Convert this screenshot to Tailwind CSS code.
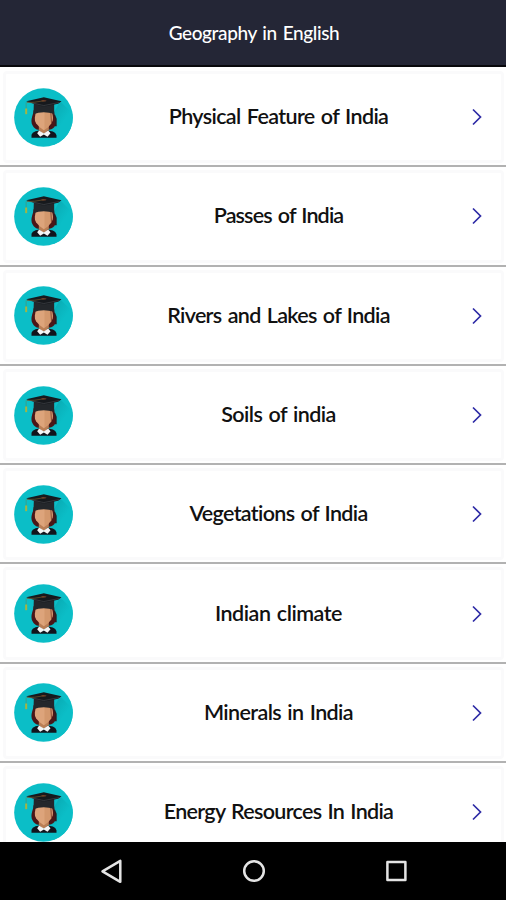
<!DOCTYPE html>
<html lang="en">
<head>
<meta charset="utf-8">
<title>Geography in English</title>
<script src="https://cdn.jsdelivr.net/npm/@tailwindcss/browser@4"></script>
</head>
<body class="w-[506px] h-[900px] overflow-hidden bg-white font-['Lato','Open_Sans',sans-serif]">
<div class="flex flex-col h-[900px]">
  <header class="h-[67px] shrink-0 bg-[#242636] border-b-2 border-[#08080c] flex items-center justify-center pl-[2px] text-white">
    <h1 class="text-[19px] leading-6 font-medium whitespace-nowrap" data-w="170" data-font="500 19px Lato">Geography in English</h1>
  </header>
  <main id="list" class="flex-1 min-h-0 overflow-hidden pt-px"></main>
  <nav class="h-[58px] shrink-0 bg-black">
    <svg class="w-full h-full" viewBox="0 0 506 58" fill="none" stroke="#e4e4e4" stroke-width="2.5" stroke-linejoin="round">
      <path d="M120.3 18.8V39.8L102.5 29.3Z"/>
      <circle cx="254" cy="29" r="9.8"/>
      <rect x="387.4" y="20" width="18" height="18"/>
    </svg>
  </nav>
</div>
<template id="row">
  <div class="h-[99.3px] border-b-2 border-[#b2b2b2] bg-white pt-[3px] pb-[2px] pl-[3px] pr-[2px]">
    <div class="h-full border-[3px] border-[#fafafb] rounded-[4px] flex items-center pl-[8px] pr-[19px]">
      <svg class="w-[59px] h-[59px] shrink-0" viewBox="17.5 16.5 177 177">
        <defs>
          <linearGradient id="shade" x1="0" y1="0" x2="1" y2="1"><stop offset=".1" stop-color="#08a3ac"/><stop offset=".5" stop-color="#0bbec7"/></linearGradient>
          <clipPath id="disc"><circle cx="106" cy="105" r="88"/></clipPath>
        </defs>
        <circle cx="106" cy="105" r="88" fill="#0bbec7"/>
        <path d="M156 56L210 110V210H160L100 155Z" fill="url(#shade)" clip-path="url(#disc)"/>
        <path d="M76 83Q76 92 72 102Q67 119 73 128Q80 141 91 142H122Q138 139 141 129Q146 116 140 102L137 82Z" fill="#4a1718"/>
        <path d="M92 128H122V153H92Z" fill="#b97e55"/>
        <path d="M83 88H131L134 106Q134 116 129 123Q120 135 107 143Q93 135 84 123Q79 116 80 106Z" fill="#dda47b"/>
        <path d="M109 88H131L134 106Q134 116 129 123Q120 135 109 142Z" fill="#d3986d"/>
        <path d="M128 90L130 122" stroke="#8c4e38" stroke-width="3"/>
        <path d="M70 166V157Q72 149 82 146L94 144L106 156L119 144L134 147Q143 150 145 158V166Z" fill="#12141c"/>
        <path d="M93 144L107 153L120 144L127 152L118 163L107 156L96 163L87 152Z" fill="#f4f5f5"/>
        <path d="M77 63L138 62V94Q122 89 107 89Q90 89 76 95Z" fill="#24272b"/>
        <path d="M54 56L104 45Q107 44 110 45L160 56L150 64L113 71Q107 72 101 71Z" fill="#16191d"/>
        <path d="M58 58L101 68Q107 70 113 68L153 60" fill="none" stroke="#44474b" stroke-width="2"/>
        <path d="M106 55L80 59L56 60" fill="none" stroke="#765d2c" stroke-width="2"/>
        <ellipse cx="107" cy="55" rx="8" ry="2" fill="#8b4b2c"/>
        <path d="M54 60V79" stroke="#4f9170" stroke-width="2"/>
        <path d="M51 78H57V95H51Z" fill="#a5b542"/>
        <path d="M138 97L143 109V131" fill="none" stroke="#2b2022" stroke-width="5"/>
      </svg>
      <div class="flex-1 text-center pl-[12px] pb-[2px]"><span class="inline-block text-[21.5px] leading-7 font-semibold text-[#111] whitespace-nowrap" data-font="600 21.5px Lato"></span></div>
      <svg class="w-[10px] h-[18px] shrink-0" viewBox="0 0 10 18" fill="none" stroke="#2d2aa5" stroke-width="1.7"><path d="M1 1.5L8.5 9L1 16.5"/></svg>
    </div>
  </div>
</template>
<script>
const topics = [
  ["Physical Feature of India", 219], ["Passes of India", 129], ["Rivers and Lakes of India", 222],
  ["Soils of india", 114], ["Vegetations of India", 178], ["Indian climate", 126],
  ["Minerals in India", 148], ["Energy Resources In India", 229]
];
const list = document.getElementById("list"), row = document.getElementById("row");
for (const [name, width] of topics) {
  const item = row.content.cloneNode(true), label = item.querySelector("span");
  label.textContent = name;
  label.dataset.w = width;
  list.append(item);
}
// Spread each label's letters to its set width, with slightly wider word gaps.
const ctx = document.createElement("canvas").getContext("2d");
const wordGap = 1.5;
for (const el of document.querySelectorAll("[data-w]")) {
  ctx.font = el.dataset.font;
  const text = el.textContent, spaces = text.split(" ").length - 1;
  const gap = (Number(el.dataset.w) + 1 - ctx.measureText(text).width - spaces * wordGap) / text.length;
  el.style.letterSpacing = gap.toFixed(3) + "px";
  el.style.wordSpacing = wordGap + "px";
}
</script>
</body>
</html>
